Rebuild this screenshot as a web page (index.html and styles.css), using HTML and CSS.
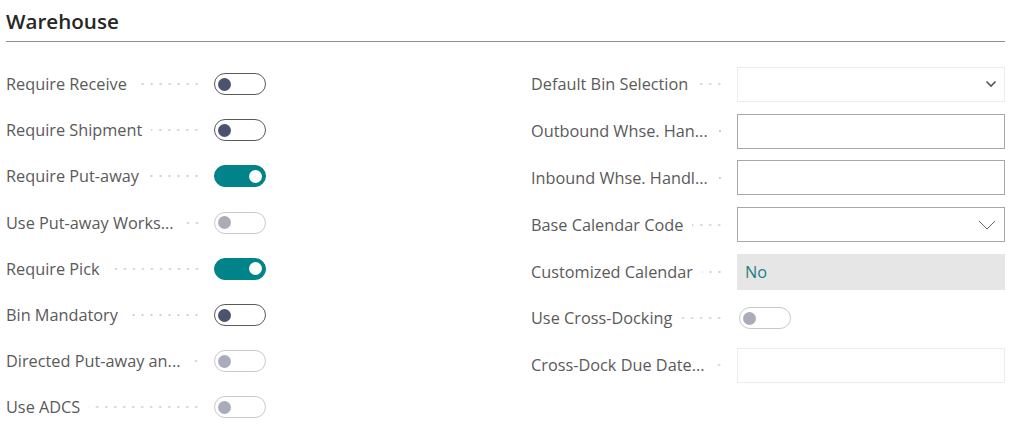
FILE: index.html
```html
<!DOCTYPE html>
<html lang="en">
<head>
<meta charset="utf-8">
<title>Warehouse</title>
<link rel="stylesheet" href="styles.css">
</head>
<body>
<section class="group">
  <h2 class="group-title">Warehouse</h2>
  <div class="cols">
    <div class="col col-left">
      <div class="row"><span class="label">Require Receive</span><span class="leader"></span><span class="toggle"><span class="knob"></span></span></div>
      <div class="row"><span class="label">Require Shipment</span><span class="leader"></span><span class="toggle"><span class="knob"></span></span></div>
      <div class="row"><span class="label">Require Put-away</span><span class="leader"></span><span class="toggle on"><span class="knob"></span></span></div>
      <div class="row"><span class="label">Use Put-away Works...</span><span class="leader"></span><span class="toggle disabled"><span class="knob"></span></span></div>
      <div class="row"><span class="label">Require Pick</span><span class="leader"></span><span class="toggle on"><span class="knob"></span></span></div>
      <div class="row"><span class="label">Bin Mandatory</span><span class="leader"></span><span class="toggle"><span class="knob"></span></span></div>
      <div class="row"><span class="label">Directed Put-away an...</span><span class="leader"></span><span class="toggle disabled"><span class="knob"></span></span></div>
      <div class="row"><span class="label">Use ADCS</span><span class="leader"></span><span class="toggle disabled"><span class="knob"></span></span></div>
    </div>
    <div class="col col-right">
      <div class="row"><span class="label">Default Bin Selection</span><span class="leader"></span>
        <span class="field faint select"><svg class="chev-small" width="12" height="8" viewBox="0 0 12 8"><path d="M1.5 1.5 L6 6 L10.5 1.5" fill="none" stroke="#555" stroke-width="1.6"/></svg></span></div>
      <div class="row"><span class="label">Outbound Whse. Han...</span><span class="leader"></span><span class="field"></span></div>
      <div class="row"><span class="label">Inbound Whse. Handl...</span><span class="leader"></span><span class="field"></span></div>
      <div class="row"><span class="label">Base Calendar Code</span><span class="leader"></span>
        <span class="field select"><svg class="chev-large" width="18" height="10" viewBox="0 0 18 10"><path d="M1 1 L9 9 L17 1" fill="none" stroke="#666" stroke-width="1"/></svg></span></div>
      <div class="row"><span class="label">Customized Calendar</span><span class="leader"></span><span class="field readonly">No</span></div>
      <div class="row"><span class="label">Use Cross-Docking</span><span class="leader"></span><span class="toggle disabled"><span class="knob"></span></span></div>
      <div class="row"><span class="label">Cross-Dock Due Date...</span><span class="leader"></span><span class="field faint"></span></div>
    </div>
  </div>
</section>
</body>
</html>
```

FILE: styles.css
```css
html, body {
  margin: 0;
  padding: 0;
  background: #ffffff;
}

body {
  font-family: "Open Sans", "Noto Sans", sans-serif;
  color: #5a5a5a;
}

.group {
  padding: 0 19px 0 6px;
}

.group-title {
  margin: 0;
  padding: 7px 0 6px 0;
  line-height: 28px;
  font-size: 20.6px;
  font-weight: 600;
  color: #262626;
  border-bottom: 1px solid #8f8f8f;
}

.cols {
  display: flex;
  margin-top: 19px;
}

.col {
  display: flex;
  flex-direction: column;
}

.col-left {
  width: 525px;
}

.col-right {
  flex: 1;
}

.row {
  display: flex;
  align-items: center;
  height: 46.2px;
}

.col-left .row {
  width: 260px;
}

.label {
  flex: none;
  font-size: 16.3px;
  color: #5a5a5a;
  white-space: nowrap;
}

.leader {
  flex: 1;
  min-width: 0;
  height: 4px;
  margin: 0 13px 0 9px;
  background-image: radial-gradient(circle, #cdcdcd 0.9px, transparent 1.3px);
  background-size: 9px 4px;
  background-repeat: repeat-x;
  background-position: right center;
}

.col-right .row {
  height: 46.8px;
  display: grid;
  grid-template-columns: auto 1fr 268px;
  align-items: center;
}

.col-right .row .toggle {
  margin-left: 2px;
}

/* toggle switch */
.toggle {
  flex: none;
  box-sizing: border-box;
  width: 52px;
  height: 22px;
  border: 1px solid #5a5a5a;
  border-radius: 11px;
  display: flex;
  align-items: center;
  justify-content: flex-start;
  padding: 0 3px;
  background: #ffffff;
}

.toggle .knob {
  width: 13px;
  height: 13px;
  border-radius: 50%;
  background: #4a5470;
}

.toggle.on {
  background: #008489;
  border-color: #008489;
  justify-content: flex-end;
}

.toggle.on .knob {
  background: #ffffff;
}

.toggle.disabled {
  border-color: #c9c9c9;
}

.toggle.disabled .knob {
  background: #aaadb9;
}

/* input fields */
.field {
  box-sizing: border-box;
  width: 268px;
  height: 35px;
  border: 1px solid #a8a8a8;
  background: #ffffff;
  display: flex;
  align-items: center;
  padding: 0 7px;
  font-size: 16.3px;
}

.field.faint {
  border-color: #ececec;
}

.field.select {
  justify-content: flex-end;
}

.chev-large {
  margin-right: 1px;
}

.field.readonly {
  border-color: #e6e6e6;
  background: #e6e6e6;
  color: #1f7f86;
  height: 36px;
}
```
